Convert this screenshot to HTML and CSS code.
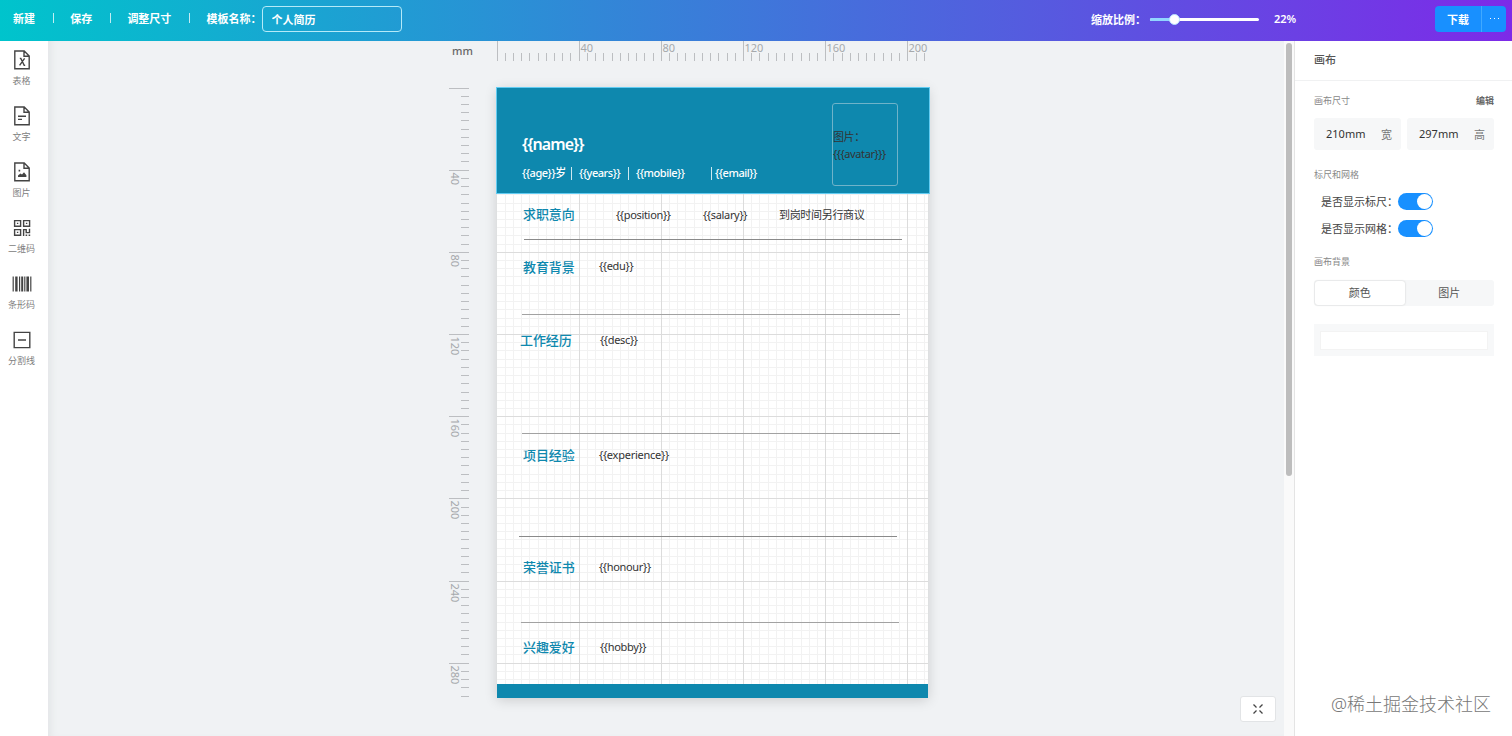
FILE: index.html
```html
<!DOCTYPE html>
<html lang="zh-CN">
<head>
    <meta charset="UTF-8">
    <title>个人简历</title>
    <link rel="stylesheet" href="styles.css">
</head>
<body>
    <header class="topbar">
        <nav class="menu">
            <a class="menu-item">新建</a>
            <i class="menu-line"></i>
            <a class="menu-item">保存</a>
            <i class="menu-line"></i>
            <a class="menu-item">调整尺寸</a>
            <i class="menu-line"></i>
            <label class="menu-item" for="tplName">模板名称：</label>
            <input class="name-input" id="tplName" type="text" value="个人简历">
        </nav>
        <div class="zoom">
            <span class="zoom-label">缩放比例：</span>
            <div class="zoom-track"><div class="zoom-fill"></div><div class="zoom-handle"></div></div>
            <span class="zoom-value">22%</span>
        </div>
        <div class="download">
            <button class="download-btn">下载</button>
            <button class="download-more"><i></i><i></i><i></i></button>
        </div>
    </header>

    <main class="main">
        <aside class="sidebar">
            <div class="tool">
                <svg viewBox="0 0 20 22"><path d="M2.8 2h9.4l5 5v12.8H2.8zM12 2v5.2h5M7.8 9.4h1l3.4 7h1M12.6 9.4l-5 7"/></svg>
                <span>表格</span>
            </div>
            <div class="tool">
                <svg viewBox="0 0 20 22"><path d="M2.8 2h9.4l5 5v12.8H2.8zM12 2v5.2h5M6 11.2h8M6 14.4h4"/></svg>
                <span>文字</span>
            </div>
            <div class="tool">
                <svg viewBox="0 0 20 22"><path d="M2.8 2h9.4l5 5v12.8H2.8zM12 2v5.2h5"/><path class="solid" d="M6 16v-1.6l2.4-2 1.6 1.2 2-2.4 2.4 3V16zM6.6 8.8h1.6v1.6H6.6z"/></svg>
                <span>图片</span>
            </div>
            <div class="tool">
                <svg viewBox="0 0 20 22"><path d="M2.6 3.6h6v5.6h-6zM11.6 3.6h6v5.6h-6zM2.6 12.6h6v5.6h-6zM11.6 19v-6.4h2.6v3h3.3v-3.8"/><path class="solid" d="M4.9 5.7h1.4v1.4H4.9zM13.9 5.7h1.4v1.4h-1.4zM4.9 14.7h1.4v1.4H4.9zM13.6 17.4h1.6V19h-1.6zM16.6 17.4h1.6V19h-1.6z"/></svg>
                <span>二维码</span>
            </div>
            <div class="tool">
                <svg viewBox="0 0 20 22"><path class="solid" d="M.6 3.5h1.2v15H.6zM3.2 3.5h2.4v15H3.2zM7 3.5h1.2v15H7zM9.2 3.5h2v15h-2zM12.2 3.5h1.2v15h-1.2zM14.4 3.5h2.6v15h-2.6zM18.2 3.5h1.2v15h-1.2z"/></svg>
                <span>条形码</span>
            </div>
            <div class="tool">
                <svg viewBox="0 0 20 22"><path d="M2.2 3.4h15.6v15.2H2.2zM6 11h8"/></svg>
                <span>分割线</span>
            </div>
        </aside>

        <section class="workspace">
            <div class="board">
                <div class="unit">mm</div>
                <svg class="ruler ruler-x" id="rulerX"></svg>
                <svg class="ruler ruler-y" id="rulerY"></svg>
                <div class="paper">
                    <svg class="grid" id="grid"></svg>

                    <div class="banner"></div>
                    <div class="text name">{{name}}</div>
                    <div class="text info age">{{age}}岁</div>
                    <div class="text info years">{{years}}</div>
                    <div class="text info mobile">{{mobile}}</div>
                    <div class="text info email">{{email}}</div>
                    <i class="bar bar-1"></i>
                    <i class="bar bar-2"></i>
                    <i class="bar bar-3"></i>
                    <div class="avatar"><span>图片：<br><b>{{{avatar}}}</b></span></div>

                    <div class="text title intent">求职意向</div>
                    <div class="text position">{{position}}</div>
                    <div class="text salary">{{salary}}</div>
                    <div class="text arrive">到岗时间另行商议</div>
                    <i class="rule rule-1"></i>

                    <div class="text title edu-title">教育背景</div>
                    <div class="text edu">{{edu}}</div>
                    <i class="rule rule-2"></i>

                    <div class="text title work-title">工作经历</div>
                    <div class="text desc">{{desc}}</div>
                    <i class="rule rule-3"></i>

                    <div class="text title project-title">项目经验</div>
                    <div class="text experience">{{experience}}</div>
                    <i class="rule rule-4"></i>

                    <div class="text title honour-title">荣誉证书</div>
                    <div class="text honour">{{honour}}</div>
                    <i class="rule rule-5"></i>

                    <div class="text title hobby-title">兴趣爱好</div>
                    <div class="text hobby">{{hobby}}</div>

                    <div class="footer-bar"></div>
                </div>
            </div>
            <div class="scrollbar"><div class="scroll-thumb"></div></div>
            <button class="fit-btn">
                <svg viewBox="0 0 12 12"><path d="M1.5 1.5l3 3M10.5 1.5l-3 3M1.5 10.5l3-3M10.5 10.5l-3-3"/></svg>
            </button>
        </section>

        <aside class="panel">
            <h2 class="panel-title">画布</h2>
            <div class="panel-body">
                <div class="panel-row">
                    <span class="caption">画布尺寸</span>
                    <a class="edit">编辑</a>
                </div>
                <div class="sizes">
                    <div class="size"><span>210mm</span><em>宽</em></div>
                    <div class="size"><span>297mm</span><em>高</em></div>
                </div>
                <div class="caption ruler-caption">标尺和网格</div>
                <div class="switch-row"><span>是否显示标尺：</span><i class="switch"></i></div>
                <div class="switch-row"><span>是否显示网格：</span><i class="switch"></i></div>
                <div class="caption bg-caption">画布背景</div>
                <div class="tabs">
                    <span class="tab active">颜色</span>
                    <span class="tab">图片</span>
                </div>
                <div class="color-box"><div class="color-value"></div></div>
            </div>
            <div class="watermark">@稀土掘金技术社区</div>
        </aside>
    </main>
    <script src="main.js"></script>
</body>
</html>
```
FILE: styles.css
```css
* {
    box-sizing: border-box;
}
body {
    margin: 0;
    height: 736px;
    overflow: hidden;
    display: flex;
    flex-direction: column;
    font-family: "Noto Sans", "Noto Sans CJK SC", sans-serif;
    font-size: 11px;
    color: #333;
}
button, input {
    font-family: inherit;
}

/* top bar */
.topbar {
    height: 41px;
    flex: none;
    display: flex;
    align-items: center;
    padding: 0 6px 3px 13px;
    background: linear-gradient(90deg, #00c4cc, #7d2ae8);
    color: #fff;
    font-weight: 600;
}
.menu {
    display: flex;
    align-items: center;
    line-height: 14px;
}
.menu-line {
    width: 1px;
    height: 10px;
    margin: 0 16.5px 2px 17.7px;
    background: rgba(255, 255, 255, .75);
}
.menu-item {
    white-space: nowrap;
    padding-bottom: 1px;
}
.name-input {
    width: 140px;
    height: 26px;
    padding: 0 9px 1px;
    border: 1px solid #b5eaf8;
    border-radius: 4px;
    background: transparent;
    color: #fff;
    font-size: 11px;
    font-weight: 600;
}
.zoom {
    display: flex;
    align-items: center;
    margin-left: auto;
}
.zoom-label, .zoom-value {
    padding-bottom: 1px;
}
.zoom-track {
    position: relative;
    width: 109px;
    height: 3px;
    margin: 0 15px 0 4px;
    border-radius: 2px;
    background: #fff;
}
.zoom-fill {
    width: 22%;
    height: 3px;
    border-radius: 2px;
    background: #91d5ff;
}
.zoom-handle {
    position: absolute;
    left: 19px;
    top: -4px;
    width: 11px;
    height: 11px;
    border: 1px solid #b5e2ff;
    border-radius: 50%;
    background: #fff;
}
.zoom-value {
    width: 24px;
}
.download {
    display: flex;
    height: 26px;
    margin-left: 137px;
    border-radius: 4px;
    overflow: hidden;
    background: #1890ff;
}
.download-btn, .download-more {
    border: none;
    padding: 0;
    background: none;
    color: #fff;
    font-size: 11px;
    font-weight: 600;
}
.download-btn {
    width: 46px;
}
.download-more {
    width: 25px;
    display: flex;
    align-items: center;
    justify-content: center;
    gap: 3px;
    padding-bottom: 2px;
    border-left: 1px solid #40a9ff;
}
.download-more i {
    width: 1px;
    height: 1px;
    background: #fff;
}

.main {
    flex: 1;
    display: flex;
    min-height: 0;
}

/* left tools */
.sidebar {
    width: 48px;
    flex: none;
    padding: 8px 5px 0 0;
    background: #fff;
}
.tool {
    height: 56px;
    display: flex;
    flex-direction: column;
    align-items: center;
    font-size: 9px;
    line-height: 14px;
    color: #808080;
}
.tool svg {
    width: 20px;
    height: 22px;
    margin-bottom: 3px;
    fill: none;
    stroke: #444;
    stroke-width: 1.4;
}
.tool .solid {
    fill: #444;
    stroke: none;
}

/* work area */
.workspace {
    position: relative;
    flex: 1;
    display: flex;
    justify-content: space-between;
    background: #f0f2f4;
    box-shadow: inset 7px 0 7px -4px #e3e5e7;
}
.board {
    display: grid;
    grid-template-columns: 48px 431px;
    grid-template-rows: 47px 610px;
    margin-left: 401px;
}
.unit {
    padding: 2px 0 0 3px;
    font-size: 11px;
    font-weight: 500;
    color: #666;
}
.ruler {
    display: block;
    overflow: visible;
    font-size: 11px;
    fill: #a6a9ac;
}
.ruler-x {
    width: 431px;
    height: 20px;
}
.ruler-y {
    width: 21px;
    height: 610px;
}
.ruler path {
    stroke: #bcbec1;
    stroke-width: 1;
    fill: none;
}
.paper {
    position: relative;
    background: #fff;
    box-shadow: 0 2px 12px rgba(0, 0, 0, .16);
}
.grid {
    display: block;
    width: 431px;
    height: 610px;
    fill: none;
}
.grid-minor {
    stroke: #f2f2f2;
}
.grid-major {
    stroke: #dcdcdc;
}

/* items placed on the paper */
.banner {
    position: absolute;
    left: -1px;
    top: -1px;
    width: 434px;
    height: 107px;
    border: 1px solid #62ccf2;
    background: #0e88ae;
}
.footer-bar {
    position: absolute;
    left: 0;
    bottom: 0;
    width: 431px;
    height: 14px;
    background: #0e88ae;
}
.text {
    position: absolute;
    line-height: 20px;
    font-size: 11px;
    letter-spacing: -0.32px;
    white-space: nowrap;
}
.name {
    left: 25px;
    top: 46px;
    font-size: 16px;
    font-weight: 600;
    letter-spacing: -0.95px;
    color: #fff;
}
.info {
    top: 75px;
    font-weight: 500;
    letter-spacing: -0.45px;
    color: #fff;
}
.age { left: 25px; }
.years { left: 82px; }
.mobile { left: 139px; }
.email { left: 218px; }
.bar {
    position: absolute;
    top: 79px;
    width: 1px;
    height: 13px;
    background: #cde8f0;
}
.bar-1 { left: 74px; }
.bar-2 { left: 131px; }
.bar-3 { left: 214px; }
.avatar {
    position: absolute;
    left: 335px;
    top: 15px;
    width: 66px;
    height: 83px;
    display: flex;
    align-items: center;
    border: 1px solid #6fb3c9;
    border-radius: 3px;
    line-height: 17px;
    font-size: 11px;
    letter-spacing: -0.4px;
}
.avatar b {
    font-weight: 400;
}
.title {
    font-size: 13px;
    font-weight: 500;
    letter-spacing: -0.1px;
    color: #0e88ae;
}
.intent { left: 26px; top: 116px; }
.edu-title { left: 26px; top: 169px; }
.work-title { left: 23px; top: 242px; }
.project-title { left: 26px; top: 357px; }
.honour-title { left: 26px; top: 469px; }
.hobby-title { left: 26px; top: 549px; }
.position { left: 119px; top: 117px; }
.salary { left: 206px; top: 117px; }
.arrive { left: 282px; top: 117px; }
.edu { left: 102px; top: 168px; }
.desc { left: 103px; top: 242px; }
.experience { left: 102px; top: 357px; letter-spacing: -0.25px; }
.honour { left: 102px; top: 469px; }
.hobby { left: 103px; top: 549px; }
.rule {
    position: absolute;
    width: 378px;
    height: 1px;
    background: #a2a2a2;
}
.rule-1 { left: 27px; top: 151px; background: #8a8a8a; }
.rule-2 { left: 25px; top: 226px; }
.rule-3 { left: 25px; top: 345px; }
.rule-4 { left: 22px; top: 448px; background: #8a8a8a; }
.rule-5 { left: 24px; top: 534px; }

.scrollbar {
    width: 11px;
    padding: 2px 2px 0 2px;
    background: #fafafa;
    border-right: 1px solid #e4e4e4;
}
.scroll-thumb {
    width: 6px;
    height: 433px;
    border-radius: 3px;
    background: #bdbdbd;
}
.fit-btn {
    position: absolute;
    right: 19px;
    bottom: 14px;
    width: 36px;
    height: 26px;
    padding: 0;
    display: flex;
    align-items: center;
    justify-content: center;
    border: 1px solid #e2e4e6;
    border-radius: 3px;
    background: #fff;
}
.fit-btn svg {
    width: 12px;
    height: 12px;
    fill: none;
    stroke: #444;
    stroke-width: 1.3;
}

/* right panel */
.panel {
    position: relative;
    width: 217px;
    flex: none;
    background: #fff;
}
.panel-title {
    height: 40px;
    margin: 0;
    padding-left: 19px;
    border-bottom: 1px solid #f0f1f2;
    font-size: 11px;
    font-weight: 500;
    line-height: 38px;
    color: #555;
}
.panel-body {
    padding: 12px 18px 0 19px;
}
.panel-row {
    display: flex;
    justify-content: space-between;
}
.caption {
    font-size: 9px;
    line-height: 16px;
    color: #888;
}
.edit {
    font-size: 9px;
    font-weight: 600;
    line-height: 15px;
    color: #666;
}
.sizes {
    display: flex;
    gap: 6px;
    margin-top: 9px;
}
.size {
    flex: 1;
    height: 32px;
    display: flex;
    align-items: center;
    justify-content: space-between;
    padding: 0 9px 1px 12px;
    border-radius: 3px;
    background: #f6f7f8;
}
.size em {
    font-style: normal;
    color: #777;
}
.ruler-caption {
    margin: 17px 0 5px;
}
.switch-row {
    height: 27px;
    display: flex;
    align-items: center;
    padding-left: 7px;
    color: #444;
}
.switch-row span {
    padding-bottom: 1px;
}
.switch {
    width: 35px;
    height: 17px;
    padding: 1px;
    border-radius: 9px;
    background: #1890ff;
}
.switch:before {
    content: "";
    display: block;
    width: 15px;
    height: 15px;
    margin-left: 18px;
    border-radius: 50%;
    background: #fff;
}
.bg-caption {
    margin: 12px 0 10px;
}
.tabs {
    display: flex;
    height: 26px;
    border-radius: 3px;
    background: #f6f7f8;
}
.tab {
    flex: 1;
    line-height: 26px;
    text-align: center;
    color: #555;
}
.tab.active {
    margin: 1px 0 1px 1px;
    border-radius: 3px;
    line-height: 24px;
    background: #fff;
    box-shadow: 0 0 2px rgba(0, 0, 0, .2);
}
.color-box {
    height: 32px;
    margin-top: 18px;
    padding: 7px 6px 6px;
    background: #f7f8f9;
}
.color-value {
    height: 19px;
    background: #fff;
    border: 1px solid #f3f3f3;
}
.watermark {
    position: absolute;
    right: 21px;
    bottom: 20px;
    font-size: 18px;
    font-weight: 300;
    line-height: 24px;
    white-space: nowrap;
    color: #777;
}
```
FILE: main.js
```js
// 210mm x 297mm paper drawn 431px wide
const SCALE = 431.4 / 210;
const WIDTH = 210;
const HEIGHT = 297;
const px = mm => Math.floor(mm * SCALE) + 0.5;

function ruler(id, length, vertical) {
    let d = '';
    let labels = '';
    for (let mm = 0; mm <= length; mm += 4) {
        const major = mm % 40 === 0;
        const p = px(mm);
        const start = major ? 0 : 12;
        d += vertical ? `M${start} ${p}H20` : `M${p} ${start}V20`;
        if (major && mm > 0) {
            labels += vertical
                ? `<text transform="translate(2 ${p + 2}) rotate(90)">${mm}</text>`
                : `<text x="${p + 1}" y="11">${mm}</text>`;
        }
    }
    document.getElementById(id).innerHTML = `<path d="${d}"/>` + labels;
}

function grid() {
    let minor = '';
    let major = '';
    for (let mm = 4; mm <= HEIGHT; mm += 4) {
        const p = px(mm);
        let d = `M0 ${p}H431`;
        if (mm < WIDTH) d += `M${p} 0V610`;
        if (mm % 40 === 0) major += d;
        else minor += d;
    }
    document.getElementById('grid').innerHTML =
        `<path class="grid-minor" d="${minor}"/><path class="grid-major" d="${major}"/>`;
}

ruler('rulerX', WIDTH, false);
ruler('rulerY', HEIGHT, true);
grid();
```
